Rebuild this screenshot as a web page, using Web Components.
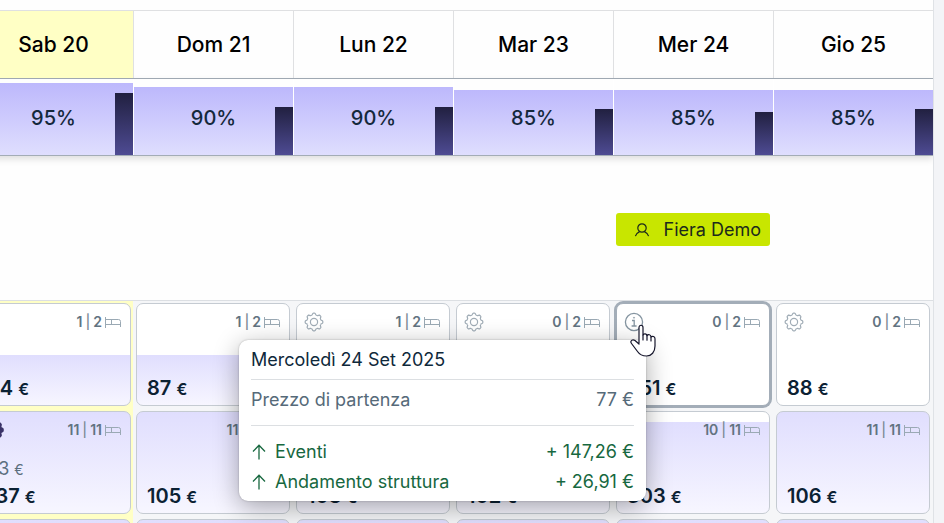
<!DOCTYPE html>
<html lang="it">
<head>
<meta charset="utf-8">
<title>Calendario prezzi</title>
<style>
  html, body { margin: 0; height: 100%; overflow: hidden; }
  body { font-family: Inter, "Liberation Sans", sans-serif; color: #0d2536; background: #f3f4f7; }
</style>
</head>
<body>
<planner-board></planner-board>

<script>
const gearPath = (() => {
  const pts = [];
  for (let i = 0; i < 128; i++) {
    const a = i / 128 * Math.PI * 2;
    const wave = Math.max(-1, Math.min(1, Math.cos(a * 8) * 1.7));
    const r = 8 + wave * 0.8;
    pts.push((10 + r * Math.sin(a)).toFixed(2) + ' ' + (10 - r * Math.cos(a)).toFixed(2));
  }
  return 'M' + pts.join('L') + 'Z';
})();

const icons = {
  gear: `<svg viewBox="0 0 20 20" width="20" height="20" fill="none" stroke="currentColor" stroke-width="1.2"><path d="${gearPath}"/><circle cx="10" cy="10" r="3.6"/></svg>`,
  gearSolid: `<svg viewBox="0 0 20 20" width="20" height="20" fill="#3a3268" stroke="#3a3268" stroke-width="2"><path d="${gearPath}"/></svg>`,
  info: `<svg viewBox="0 0 20 20" width="20" height="20" fill="none" stroke="currentColor" stroke-width="1.3"><circle cx="10" cy="10" r="8.6"/><path d="M8 8.5h2.2v5.5M7.6 14h5"/><circle cx="10" cy="5.7" r=".6" fill="currentColor" stroke-width=".5"/></svg>`,
  bed: `<svg viewBox="0 0 16 11" width="16" height="11" fill="none" stroke="#9aa9b4"><path d="M.5 0v11M.5 2.5h13q2 0 2 2V10M.5 7.5h15M6.5 2.5v5"/></svg>`,
  user: `<svg viewBox="0 0 16 16" width="16" height="16" fill="none" stroke="currentColor" stroke-width="1.2"><circle cx="8" cy="6" r="4.2"/><path d="M1.4 14.2C2 11.8 3.600 10.600 5.600 9.600M10.400 9.600C12.400 10.600 14 11.800 14.600 14.200"/></svg>`,
  arrow: `<svg viewBox="0 0 16 18" width="16" height="18" fill="none" stroke="currentColor" stroke-width="1.3"><path d="M8 16.500V2.500M2 8.500L8 2.300L14 8.500"/></svg>`,
  hand: `<svg viewBox="0 0 26 33" width="26" height="33" fill="#fff" stroke="#15152b" stroke-width="1.2" stroke-linejoin="round" stroke-linecap="round"><path d="M9 19V3.500C9 .5 13 .5 13 3.500V11C13.600 9.300 17 9.400 17 11.700C18 10 21 10.500 21 13C22.500 11.600 25 12.500 25 14.800V22C25 28 21.500 32 16.500 32C12 32 9.500 30.500 7.500 27.500L1.500 19.500C-.3 17 2.500 14.700 5 16.500L9 20"/><path d="M13 11v5M17 11.700v4.500M21 13v4" fill="none"/></svg>`
};

class Base extends HTMLElement {
  connectedCallback() {
    if (!this.shadowRoot) this.attachShadow({ mode: 'open' }).innerHTML = this.render();
  }
  get(name) { return this.getAttribute(name) || ''; }
}

customElements.define('ui-icon', class extends Base {
  render() {
    return `<style>:host{display:inline-flex;flex:none}svg{display:block}</style>${icons[this.get('name')]}`;
  }
});

customElements.define('day-header', class extends Base {
  render() {
    return `<style>
      :host { display: grid; place-items: center; padding: 20px 0 19px; line-height: 28px; font-size: 21px; font-weight: 500; color: #000;
        border-left: 1px solid #dfe0e2; }
      :host([today]) { background: #ffffc5; }
    </style><slot></slot>`;
  }
});

customElements.define('occupancy-cell', class extends Base {
  render() {
    return `<style>
      :host { display: grid; height: 76px; border-left: 1px solid #fff; align-items: end; }
      div, span { grid-area: 1 / 1; }
      .bar { height: ${this.get('level')}%; background: linear-gradient(#bdb8fc, #dfdefe); }
      .dark { height: ${this.get('last')}%; width: 18px; justify-self: end; background: linear-gradient(#212040, #4e4b93); }
      span { place-self: center; padding-top: 2px; font-size: 20px; line-height: 24px; font-weight: 500; color: #14283c; }
    </style><div class="bar"></div><div class="dark"></div><span><slot></slot></span>`;
  }
});

customElements.define('event-chip', class extends Base {
  render() {
    return `<style>
      :host { display: block; }
      button { all: unset; box-sizing: border-box; width: 100%; display: flex; align-items: center; justify-content: space-between;
        padding: 5px 9px 4px 18px; border-radius: 3px; background: #c8e600; color: #1c2a1c; font-size: 18px; line-height: 24px; white-space: nowrap; }
    </style><button><ui-icon name="user"></ui-icon><slot></slot></button>`;
  }
});

customElements.define('price-card', class extends Base {
  render() {
    const icon = this.get('icon');
    const label = icon === 'info' ? 'Dettagli prezzo' : 'Impostazioni prezzo';
    const old = this.get('old');
    return `<style>
      :host { display: block; position: relative; }
      article { box-sizing: border-box; min-height: 103px; display: flex; flex-direction: column; justify-content: space-between;
        padding: 8px 9px 3px 10px; border: 1px solid #c5cbd2; border-radius: 7px;
        background: linear-gradient(#e0defe, #f7f6ff) bottom / 100% ${this.get('fill') || 0}% no-repeat #fff; }
      :host([selected]) article { border-color: #a3adb8; box-shadow: 0 0 0 2px #a3adb8; }
      header { display: flex; align-items: center; justify-content: space-between; height: 20px; }
      button { all: unset; display: flex; margin-left: -3px; color: #a0acb6; }
      button.info { color: #8494a0; }
      .rooms { display: flex; align-items: center; gap: 3px; margin-left: auto; font-size: 14px; font-weight: 600; line-height: 20px; color: #627381; }
      .sep { font-weight: 500; color: #7d8b96; }
      .prices { white-space: nowrap; }
      .price { font-size: 20px; font-weight: 600; line-height: 26px; color: #0b2133; }
      .price small { font-size: 16px; font-weight: 600; }
      .old { font-size: 18px; line-height: 26px; color: #5c6f7e; }
      .old small { font-size: 14px; }
    </style>
    <article>
      <header>
        ${icon ? `<button class="${icon}" aria-label="${label}"><ui-icon name="${icon}"></ui-icon></button>` : ''}
        <div class="rooms"><span>${this.get('free')}</span><span class="sep">|</span><span>${this.get('total')}</span><ui-icon name="bed"></ui-icon></div>
      </header>
      <div class="prices">
        ${old ? `<div class="old">${old} <small>€</small></div>` : ''}
        <div class="price">${this.get('price')} <small>€</small></div>
      </div>
    </article>
    <slot></slot>`;
  }
});

customElements.define('tip-row', class extends Base {
  render() {
    return `<style>
      :host { display: flex; align-items: center; gap: 8px; line-height: 30px; color: #566a79; white-space: nowrap; }
      :host([up]) { color: #17683f; }
      .value { margin-left: auto; }
    </style>${this.hasAttribute('up') ? '<ui-icon name="arrow"></ui-icon>' : ''}<span><slot></slot></span><span class="value">${this.get('value')}</span>`;
  }
});

customElements.define('price-tooltip', class extends Base {
  render() {
    return `<style>
      :host { position: absolute; z-index: 5; top: 37px; right: calc(100% - 30px); width: 383px; padding: 5px 12px 4px;
        border-radius: 9px; background: #fff; font-size: 18px; box-shadow: 0 0 2px #0004, 0 6px 26px #0005; }
      .title { line-height: 30px; padding-bottom: 4px; color: #0f293b; }
      .base { border: solid #dcdfe2; border-width: 1px 0; padding: 5px 0 10px; margin-bottom: 11px; }
    </style>
    <div class="title"><slot name="title"></slot></div>
    <div class="base"><slot name="base"></slot></div>
    <slot></slot>`;
  }
});

customElements.define('mouse-pointer', class extends Base {
  render() {
    return `<style>:host { position: absolute; z-index: 6; left: 14px; top: 21px; }</style><ui-icon name="hand"></ui-icon>`;
  }
});

customElements.define('planner-board', class extends Base {
  render() {
    return `<style>
      :host { display: flex; height: 100vh; overflow: hidden; --cut: 27px; }
      main { flex: 1; min-width: 0; overflow: hidden; background: #fefefe; border-right: 1px solid #dfe2e6; }
      aside { flex: 0 0 10px; background: #f3f4f7; }
      .row { display: grid; grid-template-columns: repeat(6, minmax(0, 1fr)); margin-left: calc(-1 * var(--cut)); }
      .days { margin-top: 10px; border-top: 1px solid #dfe0e2; border-bottom: 1px solid #a3acb6; }
      .occupancy { border-bottom: 1px solid #a3acb6; box-shadow: 0 3px 7px #0002; }
      .events { padding: 57px 0 54px; }
      .events event-chip { grid-column: 5; margin: 0 3px; }
      .prices { border-top: 1px solid #dcdfe3; background: #f5f6f8; }
      .col { display: flex; flex-direction: column; gap: 5px; padding: 2px 3px; }
      .col.today { background: #ffffc5; padding-right: 2px; }
    </style>
    <main>
      <div class="row days">
        <day-header today>Sab 20</day-header><day-header>Dom 21</day-header><day-header>Lun 22</day-header>
        <day-header>Mar 23</day-header><day-header>Mer 24</day-header><day-header>Gio 25</day-header>
      </div>
      <div class="row occupancy">
        <occupancy-cell level="95" last="82">95%</occupancy-cell>
        <occupancy-cell level="90" last="63">90%</occupancy-cell>
        <occupancy-cell level="90" last="63">90%</occupancy-cell>
        <occupancy-cell level="85" last="61">85%</occupancy-cell>
        <occupancy-cell level="85" last="57">85%</occupancy-cell>
        <occupancy-cell level="85" last="61">85%</occupancy-cell>
      </div>
      <div class="row events"><event-chip>Fiera Demo</event-chip></div>
      <div class="row prices">
        <div class="col today">
          <price-card free="1" total="2" price="84" fill="50"></price-card>
          <price-card icon="gearSolid" free="11" total="11" old="93" price="137" fill="100"></price-card>
          <price-card free="1" total="2" price="95" fill="100"></price-card>
        </div>
        <div class="col">
          <price-card free="1" total="2" price="87" fill="50"></price-card>
          <price-card free="11" total="11" price="105" fill="100"></price-card>
          <price-card free="1" total="2" price="95" fill="100"></price-card>
        </div>
        <div class="col">
          <price-card icon="gear" free="1" total="2" price="89" fill="50"></price-card>
          <price-card free="11" total="11" price="108" fill="100"></price-card>
          <price-card free="1" total="2" price="95" fill="100"></price-card>
        </div>
        <div class="col">
          <price-card icon="gear" free="0" total="2" price="86"></price-card>
          <price-card free="11" total="11" price="102" fill="100"></price-card>
          <price-card free="1" total="2" price="95" fill="100"></price-card>
        </div>
        <div class="col">
          <price-card selected icon="info" free="0" total="2" price="251">
            <price-tooltip>
              <span slot="title">Mercoledì 24 Set 2025</span>
              <tip-row slot="base" value="77 €">Prezzo di partenza</tip-row>
              <tip-row up value="+ 147,26 €">Eventi</tip-row>
              <tip-row up value="+ 26,91 €">Andamento struttura</tip-row>
            </price-tooltip>
            <mouse-pointer></mouse-pointer>
          </price-card>
          <price-card free="10" total="11" price="303" fill="90"></price-card>
          <price-card free="1" total="2" price="95" fill="100"></price-card>
        </div>
        <div class="col">
          <price-card icon="gear" free="0" total="2" price="88"></price-card>
          <price-card free="11" total="11" price="106" fill="100"></price-card>
          <price-card free="1" total="2" price="95" fill="100"></price-card>
        </div>
      </div>
    </main>
    <aside></aside>`;
  }
});
</script>
</body>
</html>
